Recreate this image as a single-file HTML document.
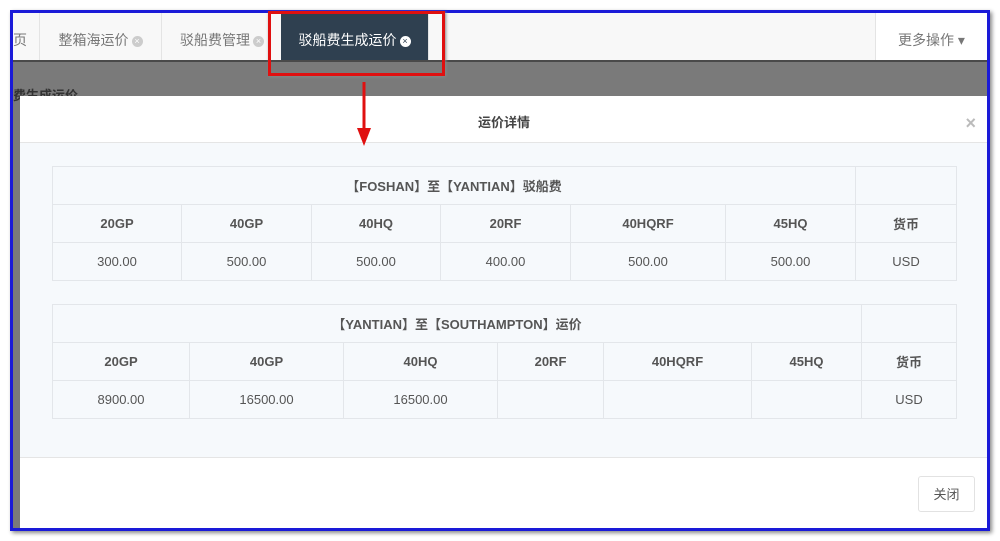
<!DOCTYPE html>
<html><head><meta charset="utf-8"><style>
*{margin:0;padding:0;box-sizing:border-box}
body{width:1000px;height:541px;background:#fff;position:relative;overflow:hidden;font-family:"Liberation Sans","Noto Sans CJK SC",sans-serif;color:#555}
.frame{position:absolute;left:10px;top:10px;width:980px;height:521px;border:3px solid #1a1ad8;box-shadow:2px 2px 4px #888;overflow:hidden;background:#7a7a7a}
.tabs{position:absolute;left:0;top:0;width:100%;height:49px;background:#f8f8f8;border-bottom:2px solid #4a4a4a}
.tab{position:absolute;top:0;height:47px;line-height:54px;font-size:14px;color:#777;border-right:1px solid #e4e4e4}
.x{display:inline-block;width:11px;height:11px;border-radius:50%;background:#ccc;color:#fff;font-size:9px;line-height:11px;text-align:center;vertical-align:1px;margin-left:3px}
.act{background:#2f4050;color:#fff}
.act .x{background:#fff;color:#2f4050}
.more{position:absolute;right:0;top:0;width:112px;height:47px;background:#fff;border-left:1px solid #e4e4e4;line-height:54px;text-align:center;font-size:14px;color:#777}
.modal{position:absolute;left:7px;top:83px;width:968px;height:440px;background:#fff}
.mh{height:47px;border-bottom:1px solid #e5e5e5;text-align:center;line-height:54px;font-size:13px;font-weight:bold;color:#444;position:relative}
.mh span{position:absolute;right:12px;top:0;color:#bbb;font-size:18px;font-weight:bold}
.mb{height:315px;background:#f6f9fc;position:relative;border-bottom:1px solid #e5e5e5}
table{position:absolute;left:32px;width:905px;border-collapse:collapse;background:#f6f9fc;font-size:13px}
td{border:1px solid #e3e6ea;text-align:center;height:38px;color:#555}
tr.h td{font-weight:bold;color:#555}
.btn{position:absolute;right:13px;bottom:24px;width:57px;height:36px;border:1px solid #e2e2e2;border-radius:3px;text-align:center;line-height:36px;font-size:13px;color:#555;background:#fff}
.red{position:absolute;left:268px;top:11px;width:177px;height:65px;border:3px solid #e01010;box-shadow:1px 1px 3px #888}
</style></head><body>
<div class="frame">
<div class="tabs">
<div class="tab" style="left:0;width:27px;padding-left:0">页</div>
<div class="tab" style="left:27px;width:122px;text-align:center">整箱海运价<span class="x">×</span></div>
<div class="tab" style="left:149px;width:120px;text-align:center;border-right:none">驳船费管理<span class="x">×</span></div>
<div class="tab act" style="left:268px;width:148px;text-align:center">驳船费生成运价<span class="x">×</span></div>
<div class="more">更多操作 ▾</div>
</div>
<div style="position:absolute;left:0;top:72px;font-size:13px;font-weight:bold;color:#333">费生成运价</div>
<div class="modal">
<div class="mh">运价详情<span>×</span></div>
<div class="mb">
<table style="top:23px">
<tr class="h"><td colspan="6">【FOSHAN】至【YANTIAN】驳船费</td><td></td></tr>
<tr class="h"><td style="width:129px">20GP</td><td style="width:130px">40GP</td><td style="width:129px">40HQ</td><td style="width:130px">20RF</td><td style="width:155px">40HQRF</td><td style="width:130px">45HQ</td><td>货币</td></tr>
<tr><td>300.00</td><td>500.00</td><td>500.00</td><td>400.00</td><td>500.00</td><td>500.00</td><td>USD</td></tr>
</table>
<table style="top:161px">
<tr class="h"><td colspan="6">【YANTIAN】至【SOUTHAMPTON】运价</td><td></td></tr>
<tr class="h"><td style="width:137px">20GP</td><td style="width:154px">40GP</td><td style="width:154px">40HQ</td><td style="width:106px">20RF</td><td style="width:148px">40HQRF</td><td style="width:110px">45HQ</td><td>货币</td></tr>
<tr><td>8900.00</td><td>16500.00</td><td>16500.00</td><td></td><td></td><td></td><td>USD</td></tr>
</table>
</div>
<div class="btn">关闭</div>
</div>
</div>
<div class="red"></div>
<svg style="position:absolute;left:354px;top:80px" width="20" height="70"><line x1="10" y1="2" x2="10" y2="52" stroke="#e01010" stroke-width="3"/><polygon points="3,48 17,48 10,66" fill="#e01010"/></svg>
</body></html>
